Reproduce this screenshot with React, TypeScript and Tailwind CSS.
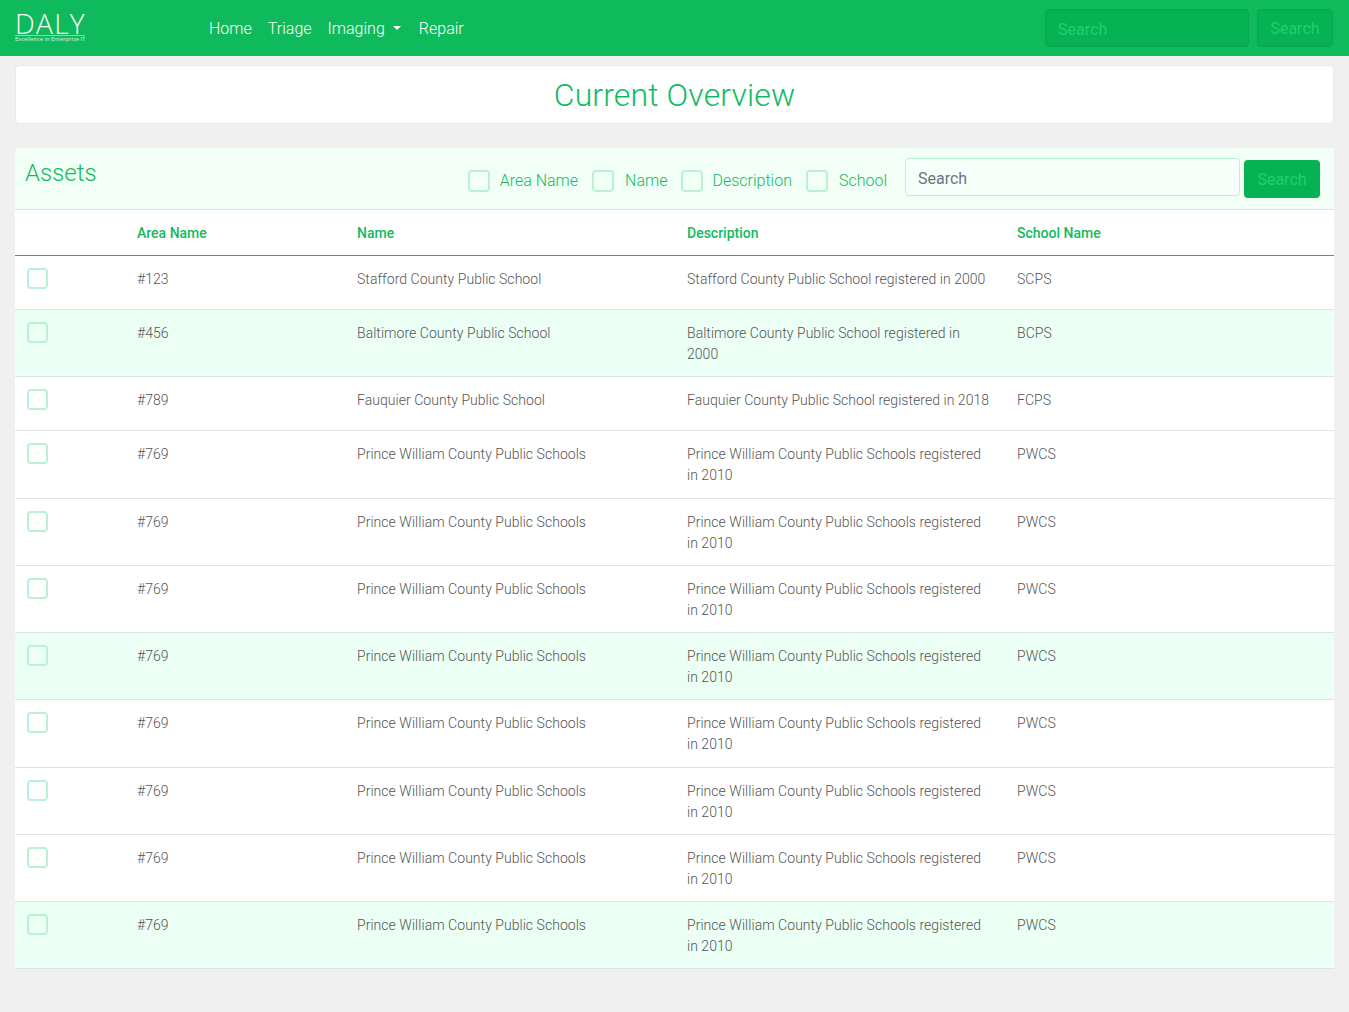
const fontRoboto = "font-['Roboto',sans-serif]";

type Row = { area: string; name: string; description: string; school: string; tint?: boolean };

const pwcs: Row = {
  area: "#769",
  name: "Prince William County Public Schools",
  description: "Prince William County Public Schools registered in 2010",
  school: "PWCS",
};

const rows: Row[] = [
  { area: "#123", name: "Stafford County Public School", description: "Stafford County Public School registered in 2000", school: "SCPS" },
  { area: "#456", name: "Baltimore County Public School", description: "Baltimore County Public School registered in 2000", school: "BCPS", tint: true },
  { area: "#789", name: "Fauquier County Public School", description: "Fauquier County Public School registered in 2018", school: "FCPS" },
  pwcs,
  pwcs,
  pwcs,
  { ...pwcs, tint: true },
  pwcs,
  pwcs,
  pwcs,
  { ...pwcs, tint: true },
];

function Check({ size = "small" }: { size?: "small" | "large" }) {
  return (
    <span
      className={
        size === "large"
          ? "block h-[22px] w-[22px] shrink-0 rounded-[4px] border-2 border-[#b9f1d2]"
          : "block h-[21px] w-[21px] rounded-[4px] border-2 border-[#b9f1d2]"
      }
    />
  );
}

function Navbar() {
  return (
    <header className="flex h-14 items-center bg-[#0fba5c] pl-[15px] pr-4">
      <div className="w-[194px] shrink-0 text-white">
        <div className="w-[70px] border-b border-white/50 pb-px">
          <div className="font-['Open_Sans',sans-serif] text-[28px] font-light leading-[21px] tracking-[1.3px]">DALY</div>
        </div>
        <div className="w-[70px] whitespace-nowrap font-['Open_Sans',sans-serif] text-[5.8px] leading-[7px] text-white/80">
          Excellence in Enterprise IT
        </div>
      </div>
      <nav className="mt-px flex items-center gap-4 text-base font-light tracking-[0.01px] text-white">
        <a>Home</a>
        <a>Triage</a>
        <a className="mr-[2px] flex items-center">
          Imaging
          <span className="ml-2 mt-[-1px] h-0 w-0 border-x-[4.8px] border-t-[4.8px] border-x-transparent border-t-white" />
        </a>
        <a>Repair</a>
      </nav>
      <div className="ml-auto flex items-center gap-2">
        <input
          placeholder="Search"
          className="h-[38px] w-[204px] rounded-[4px] border border-[#0aa552] bg-[#07b254] px-3 pt-[2px] text-base tracking-[0.05px] text-[#1fd070] outline-none placeholder:text-[#1fd070]"
        />
        <button className="h-[38px] w-[76px] rounded-[4px] border border-[#0aa552] bg-[#07b254] pt-[2px] text-base text-[#1fd070]">Search</button>
      </div>
    </header>
  );
}

function FilterBar() {
  const filters = [
    { label: "Area Name", gap: "gap-[10px]", mr: "mr-[14px]" },
    { label: "Name", gap: "gap-[11px]", mr: "mr-[14px]" },
    { label: "Description", gap: "gap-[9px]", mr: "mr-[14px]" },
    { label: "School", gap: "gap-[11px]", mr: "mr-[18px]" },
  ];
  return (
    <div className="flex h-[62px] border-b border-[#e3e3e3] bg-[#f1fff7] rounded-t-[4px] pl-[10px] pr-[14px]">
      <h2 className="mt-[8px] text-2xl font-light leading-[34px] text-[#10bb5e]">Assets</h2>
      <div className="ml-auto flex items-start">
        {filters.map((f) => (
          <label key={f.label} className={`mt-[22px] flex items-center ${f.gap} ${f.mr}`}>
            <Check size="large" />
            <span className="text-base font-light leading-[22px] text-[#10bb5e]">{f.label}</span>
          </label>
        ))}
        <input
          placeholder="Search"
          className="mt-[10px] h-[38px] w-[335px] rounded-[4px] border border-[#b9f1d2] bg-[#f6fffa] px-3 pt-[2px] text-base font-normal text-gray-600 outline-none placeholder:text-[#6c757d]"
        />
        <button className="ml-1 mt-3 h-[38px] w-[76px] rounded-[4px] bg-[#07b254] pt-[2px] text-base text-[#1fd070]">Search</button>
      </div>
    </div>
  );
}

export default function App() {
  return (
    <div className={`${fontRoboto} min-h-[1012px] bg-[#f0f0f0]`}>
      <Navbar />
      <main className="px-[15px]">
        <div className="mt-[9px] rounded-[4px] border border-[#e8e8e8] bg-white pt-[10px] pb-[8px] text-center text-[32px] font-light leading-[39px] tracking-[0.12px] text-[#10bb5e]">
          Current Overview
        </div>
        <section className="mt-6">
          <FilterBar />
          <table className="w-full table-fixed border-collapse bg-white text-sm">
            <colgroup>
              <col className="w-[110px]" />
              <col className="w-[220px]" />
              <col className="w-[330px]" />
              <col className="w-[330px]" />
              <col />
            </colgroup>
            <thead>
              <tr className="h-[45px] border-b border-[#10bb5e] text-left font-medium text-[#10bb5e]">
                <th className="px-3 pt-[2px] font-medium" />
                <th className="px-3 pt-[2px] font-medium">Area Name</th>
                <th className="px-3 pt-[2px] font-medium">Name</th>
                <th className="px-3 pt-[2px] font-medium">Description</th>
                <th className="px-3 pt-[2px] font-medium">School Name</th>
              </tr>
            </thead>
            <tbody className="font-light tracking-[0.04px] text-[#555555]">
              {rows.map((r, i) => (
                <tr
                  key={i}
                  className={[
                    i === 3 || i === 7 ? "h-[68px]" : "h-[54px]",
                    "border-b border-[#dfe3e6] align-top",
                    r.tint ? "bg-[#ebfff4]" : "",
                  ].join(" ")}
                >
                  <td className="px-3 pt-3">
                    <Check />
                  </td>
                  <td className="px-3 pt-[13px] pb-[11px] leading-[21px]">{r.area}</td>
                  <td className="px-3 pt-[13px] pb-[11px] leading-[21px]">{r.name}</td>
                  <td className="px-3 pt-[13px] pb-[11px] leading-[21px]">{r.description}</td>
                  <td className="px-3 pt-[13px] pb-[11px] leading-[21px]">{r.school}</td>
                </tr>
              ))}
            </tbody>
          </table>
        </section>
      </main>
    </div>
  );
}
